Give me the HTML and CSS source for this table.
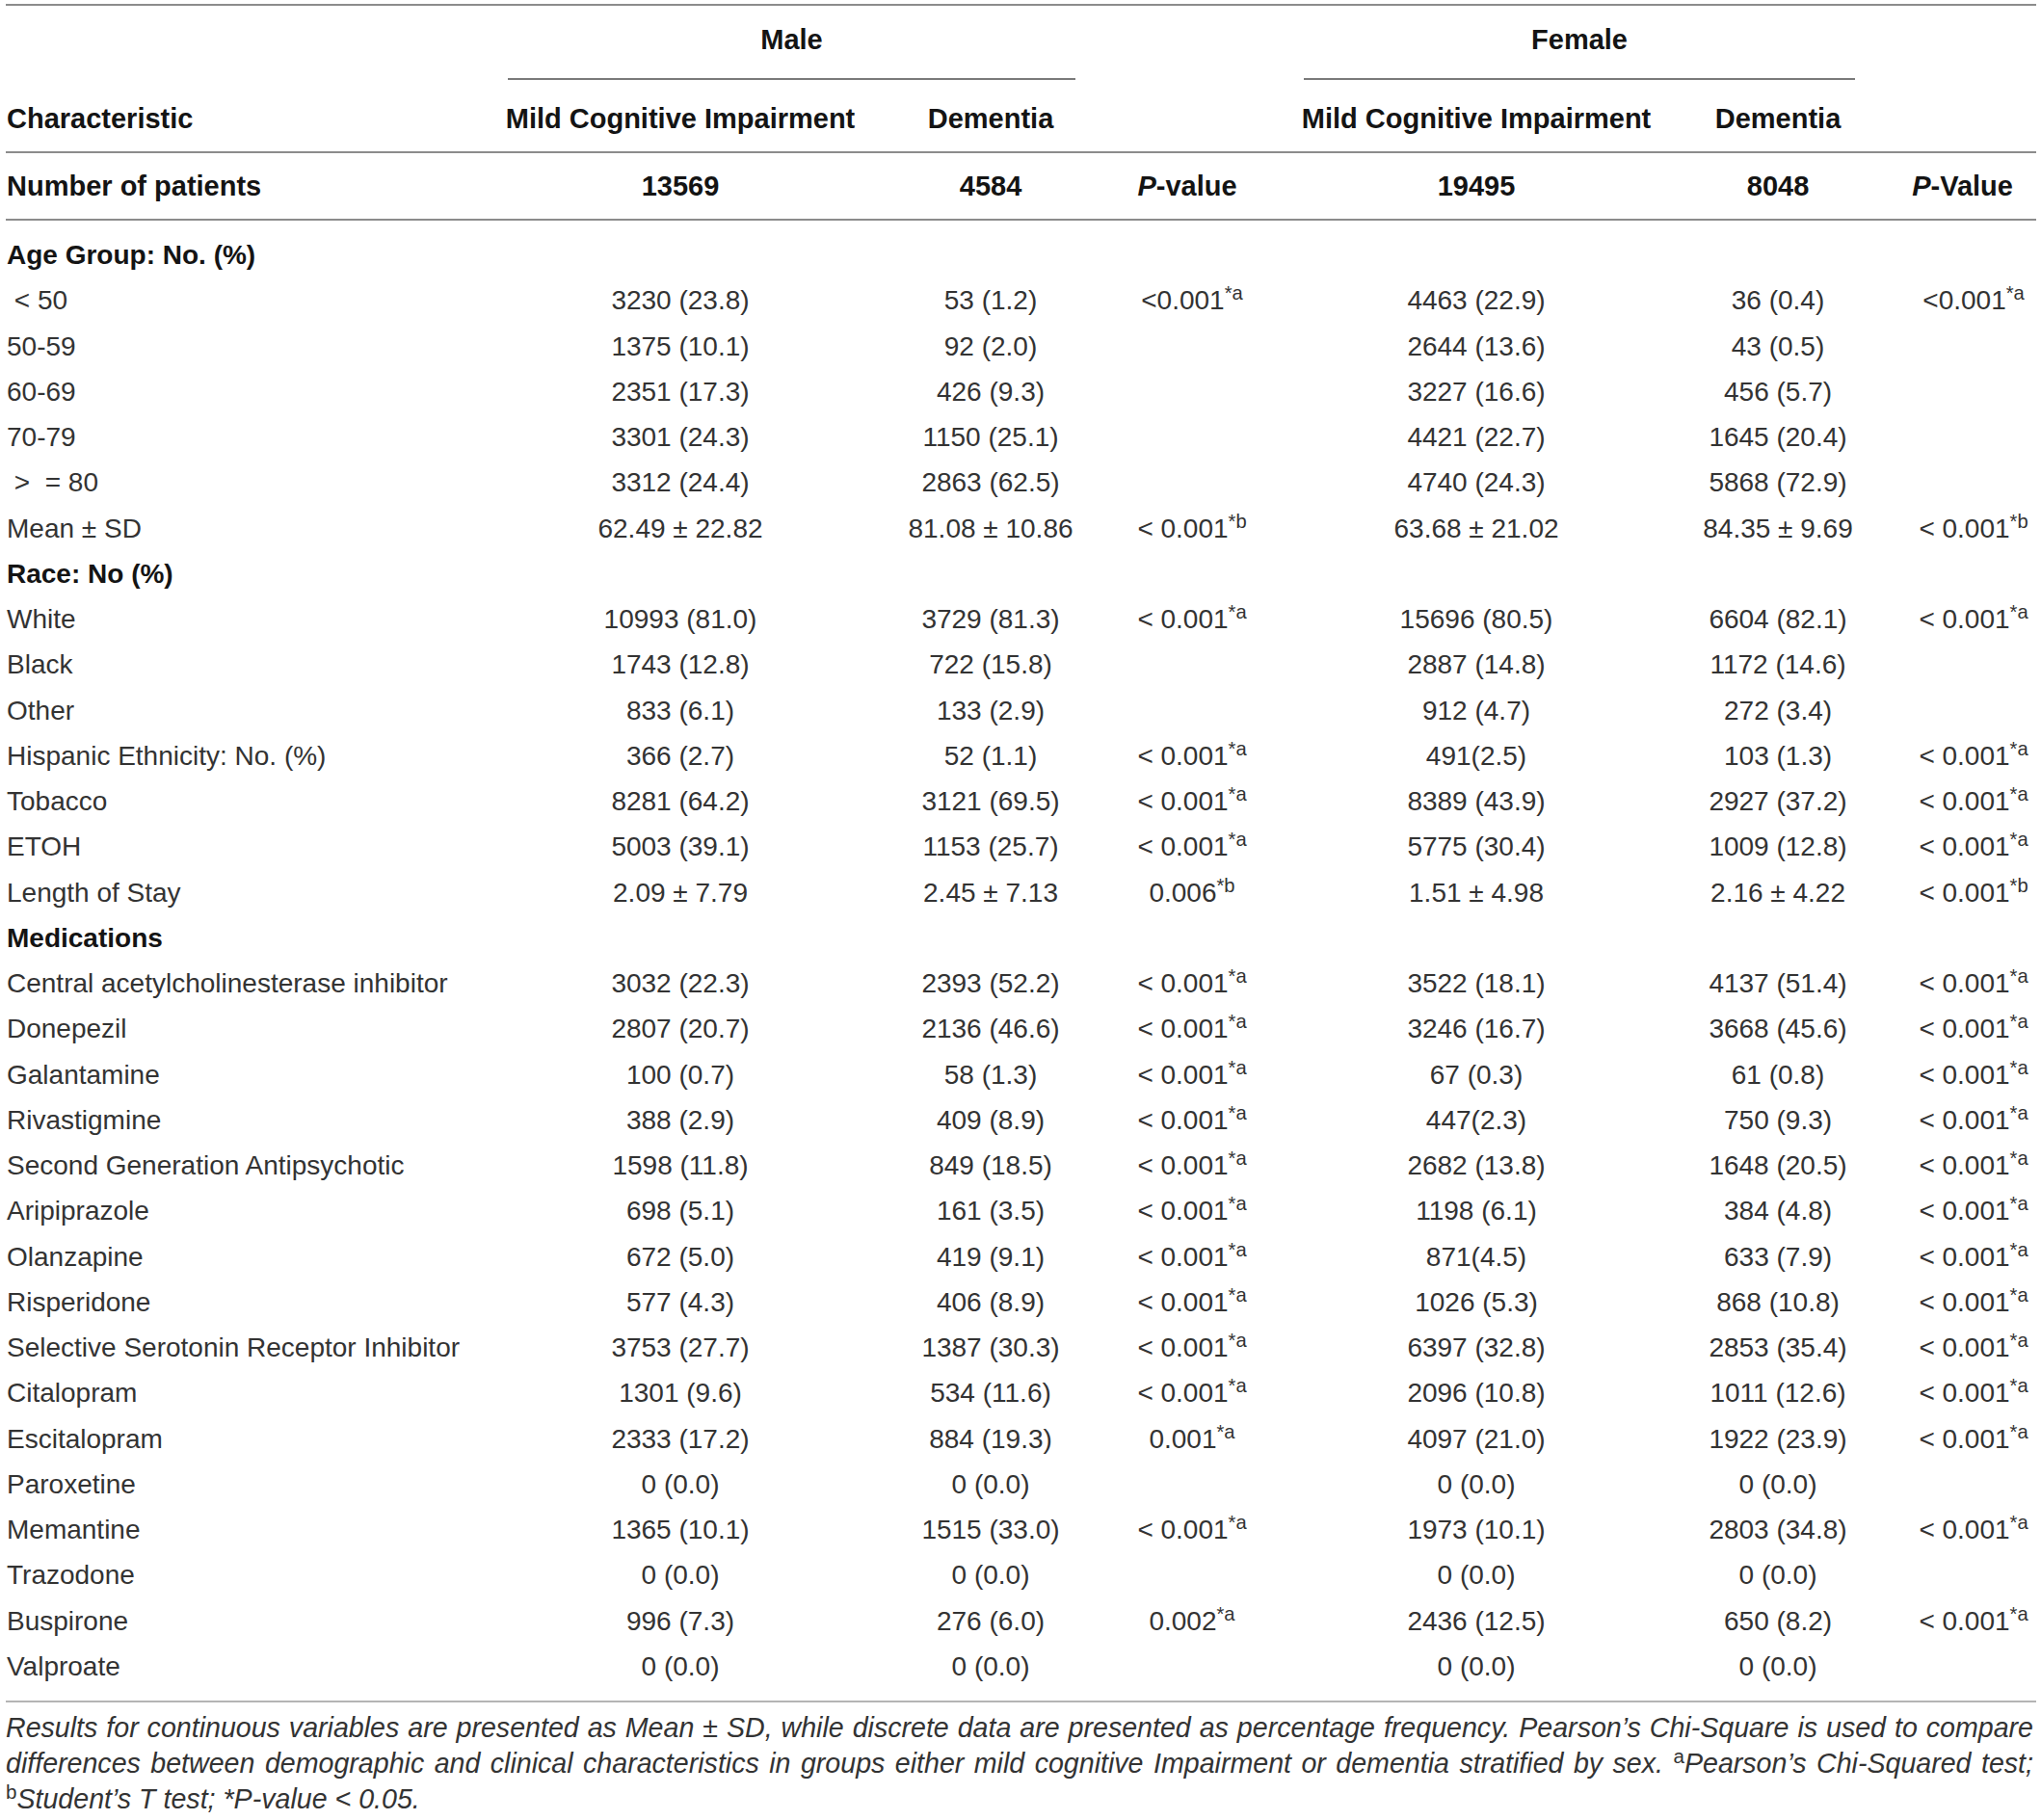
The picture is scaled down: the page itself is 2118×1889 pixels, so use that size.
FILE: index.html
```html
<!DOCTYPE html>
<html lang="en">
<head>
  <meta charset="UTF-8">
  <meta name="viewport" content="width=device-width, initial-scale=1.0">
  <title>Characteristics by sex</title>
  <link rel="stylesheet" href="styles.css">
</head>
<body>
  <div class="page">
    <table class="stats">
      <colgroup>
        <col class="c-label">
        <col class="c-mci-m">
        <col class="c-dem-m">
        <col class="c-p-m">
        <col class="c-mci-f">
        <col class="c-dem-f">
        <col class="c-p-f">
      </colgroup>
      <thead>
        <tr class="group-row">
          <th></th>
          <th colspan="2"><div class="group male">Male</div></th>
          <th></th>
          <th colspan="2"><div class="group female">Female</div></th>
          <th></th>
        </tr>
        <tr class="head-row">
          <th class="label">Characteristic</th>
          <th class="mci-m">Mild Cognitive Impairment</th>
          <th class="dem-m">Dementia</th>
          <th></th>
          <th class="mci-f">Mild Cognitive Impairment</th>
          <th class="dem-f">Dementia</th>
          <th></th>
        </tr>
        <tr class="count-row">
          <th class="label">Number of patients</th>
          <th class="mci-m">13569</th>
          <th class="dem-m">4584</th>
          <th class="p-head-m"><i>P</i>-value</th>
          <th class="mci-f">19495</th>
          <th class="dem-f">8048</th>
          <th class="p-head-f"><i>P</i>-Value</th>
        </tr>
      </thead>
      <tbody>
        <tr class="first"><td class="label section" colspan="7">Age Group: No. (%)</td></tr>
        <tr><td class="label">&nbsp;&lt; 50</td><td class="mci-m">3230 (23.8)</td><td class="dem-m">53 (1.2)</td><td class="p-m">&lt;0.001<sup>*a</sup></td><td class="mci-f">4463 (22.9)</td><td class="dem-f">36 (0.4)</td><td class="p-f">&lt;0.001<sup>*a</sup></td></tr>
        <tr><td class="label">50-59</td><td class="mci-m">1375 (10.1)</td><td class="dem-m">92 (2.0)</td><td class="p-m"></td><td class="mci-f">2644 (13.6)</td><td class="dem-f">43 (0.5)</td><td class="p-f"></td></tr>
        <tr><td class="label">60-69</td><td class="mci-m">2351 (17.3)</td><td class="dem-m">426 (9.3)</td><td class="p-m"></td><td class="mci-f">3227 (16.6)</td><td class="dem-f">456 (5.7)</td><td class="p-f"></td></tr>
        <tr><td class="label">70-79</td><td class="mci-m">3301 (24.3)</td><td class="dem-m">1150 (25.1)</td><td class="p-m"></td><td class="mci-f">4421 (22.7)</td><td class="dem-f">1645 (20.4)</td><td class="p-f"></td></tr>
        <tr><td class="label">&nbsp;&gt; &nbsp;= 80</td><td class="mci-m">3312 (24.4)</td><td class="dem-m">2863 (62.5)</td><td class="p-m"></td><td class="mci-f">4740 (24.3)</td><td class="dem-f">5868 (72.9)</td><td class="p-f"></td></tr>
        <tr><td class="label">Mean ± SD</td><td class="mci-m">62.49 ± 22.82</td><td class="dem-m">81.08 ± 10.86</td><td class="p-m">&lt; 0.001<sup>*b</sup></td><td class="mci-f">63.68 ± 21.02</td><td class="dem-f">84.35 ± 9.69</td><td class="p-f">&lt; 0.001<sup>*b</sup></td></tr>
        <tr><td class="label section" colspan="7">Race: No (%)</td></tr>
        <tr><td class="label">White</td><td class="mci-m">10993 (81.0)</td><td class="dem-m">3729 (81.3)</td><td class="p-m">&lt; 0.001<sup>*a</sup></td><td class="mci-f">15696 (80.5)</td><td class="dem-f">6604 (82.1)</td><td class="p-f">&lt; 0.001<sup>*a</sup></td></tr>
        <tr><td class="label">Black</td><td class="mci-m">1743 (12.8)</td><td class="dem-m">722 (15.8)</td><td class="p-m"></td><td class="mci-f">2887 (14.8)</td><td class="dem-f">1172 (14.6)</td><td class="p-f"></td></tr>
        <tr><td class="label">Other</td><td class="mci-m">833 (6.1)</td><td class="dem-m">133 (2.9)</td><td class="p-m"></td><td class="mci-f">912 (4.7)</td><td class="dem-f">272 (3.4)</td><td class="p-f"></td></tr>
        <tr><td class="label">Hispanic Ethnicity: No. (%)</td><td class="mci-m">366 (2.7)</td><td class="dem-m">52 (1.1)</td><td class="p-m">&lt; 0.001<sup>*a</sup></td><td class="mci-f">491(2.5)</td><td class="dem-f">103 (1.3)</td><td class="p-f">&lt; 0.001<sup>*a</sup></td></tr>
        <tr><td class="label">Tobacco</td><td class="mci-m">8281 (64.2)</td><td class="dem-m">3121 (69.5)</td><td class="p-m">&lt; 0.001<sup>*a</sup></td><td class="mci-f">8389 (43.9)</td><td class="dem-f">2927 (37.2)</td><td class="p-f">&lt; 0.001<sup>*a</sup></td></tr>
        <tr><td class="label">ETOH</td><td class="mci-m">5003 (39.1)</td><td class="dem-m">1153 (25.7)</td><td class="p-m">&lt; 0.001<sup>*a</sup></td><td class="mci-f">5775 (30.4)</td><td class="dem-f">1009 (12.8)</td><td class="p-f">&lt; 0.001<sup>*a</sup></td></tr>
        <tr><td class="label">Length of Stay</td><td class="mci-m">2.09 ± 7.79</td><td class="dem-m">2.45 ± 7.13</td><td class="p-m">0.006<sup>*b</sup></td><td class="mci-f">1.51 ± 4.98</td><td class="dem-f">2.16 ± 4.22</td><td class="p-f">&lt; 0.001<sup>*b</sup></td></tr>
        <tr><td class="label section" colspan="7">Medications</td></tr>
        <tr><td class="label">Central acetylcholinesterase inhibitor</td><td class="mci-m">3032 (22.3)</td><td class="dem-m">2393 (52.2)</td><td class="p-m">&lt; 0.001<sup>*a</sup></td><td class="mci-f">3522 (18.1)</td><td class="dem-f">4137 (51.4)</td><td class="p-f">&lt; 0.001<sup>*a</sup></td></tr>
        <tr><td class="label">Donepezil</td><td class="mci-m">2807 (20.7)</td><td class="dem-m">2136 (46.6)</td><td class="p-m">&lt; 0.001<sup>*a</sup></td><td class="mci-f">3246 (16.7)</td><td class="dem-f">3668 (45.6)</td><td class="p-f">&lt; 0.001<sup>*a</sup></td></tr>
        <tr><td class="label">Galantamine</td><td class="mci-m">100 (0.7)</td><td class="dem-m">58 (1.3)</td><td class="p-m">&lt; 0.001<sup>*a</sup></td><td class="mci-f">67 (0.3)</td><td class="dem-f">61 (0.8)</td><td class="p-f">&lt; 0.001<sup>*a</sup></td></tr>
        <tr><td class="label">Rivastigmine</td><td class="mci-m">388 (2.9)</td><td class="dem-m">409 (8.9)</td><td class="p-m">&lt; 0.001<sup>*a</sup></td><td class="mci-f">447(2.3)</td><td class="dem-f">750 (9.3)</td><td class="p-f">&lt; 0.001<sup>*a</sup></td></tr>
        <tr><td class="label">Second Generation Antipsychotic</td><td class="mci-m">1598 (11.8)</td><td class="dem-m">849 (18.5)</td><td class="p-m">&lt; 0.001<sup>*a</sup></td><td class="mci-f">2682 (13.8)</td><td class="dem-f">1648 (20.5)</td><td class="p-f">&lt; 0.001<sup>*a</sup></td></tr>
        <tr><td class="label">Aripiprazole</td><td class="mci-m">698 (5.1)</td><td class="dem-m">161 (3.5)</td><td class="p-m">&lt; 0.001<sup>*a</sup></td><td class="mci-f">1198 (6.1)</td><td class="dem-f">384 (4.8)</td><td class="p-f">&lt; 0.001<sup>*a</sup></td></tr>
        <tr><td class="label">Olanzapine</td><td class="mci-m">672 (5.0)</td><td class="dem-m">419 (9.1)</td><td class="p-m">&lt; 0.001<sup>*a</sup></td><td class="mci-f">871(4.5)</td><td class="dem-f">633 (7.9)</td><td class="p-f">&lt; 0.001<sup>*a</sup></td></tr>
        <tr><td class="label">Risperidone</td><td class="mci-m">577 (4.3)</td><td class="dem-m">406 (8.9)</td><td class="p-m">&lt; 0.001<sup>*a</sup></td><td class="mci-f">1026 (5.3)</td><td class="dem-f">868 (10.8)</td><td class="p-f">&lt; 0.001<sup>*a</sup></td></tr>
        <tr><td class="label">Selective Serotonin Receptor Inhibitor</td><td class="mci-m">3753 (27.7)</td><td class="dem-m">1387 (30.3)</td><td class="p-m">&lt; 0.001<sup>*a</sup></td><td class="mci-f">6397 (32.8)</td><td class="dem-f">2853 (35.4)</td><td class="p-f">&lt; 0.001<sup>*a</sup></td></tr>
        <tr><td class="label">Citalopram</td><td class="mci-m">1301 (9.6)</td><td class="dem-m">534 (11.6)</td><td class="p-m">&lt; 0.001<sup>*a</sup></td><td class="mci-f">2096 (10.8)</td><td class="dem-f">1011 (12.6)</td><td class="p-f">&lt; 0.001<sup>*a</sup></td></tr>
        <tr><td class="label">Escitalopram</td><td class="mci-m">2333 (17.2)</td><td class="dem-m">884 (19.3)</td><td class="p-m">0.001<sup>*a</sup></td><td class="mci-f">4097 (21.0)</td><td class="dem-f">1922 (23.9)</td><td class="p-f">&lt; 0.001<sup>*a</sup></td></tr>
        <tr><td class="label">Paroxetine</td><td class="mci-m">0 (0.0)</td><td class="dem-m">0 (0.0)</td><td class="p-m"></td><td class="mci-f">0 (0.0)</td><td class="dem-f">0 (0.0)</td><td class="p-f"></td></tr>
        <tr><td class="label">Memantine</td><td class="mci-m">1365 (10.1)</td><td class="dem-m">1515 (33.0)</td><td class="p-m">&lt; 0.001<sup>*a</sup></td><td class="mci-f">1973 (10.1)</td><td class="dem-f">2803 (34.8)</td><td class="p-f">&lt; 0.001<sup>*a</sup></td></tr>
        <tr><td class="label">Trazodone</td><td class="mci-m">0 (0.0)</td><td class="dem-m">0 (0.0)</td><td class="p-m"></td><td class="mci-f">0 (0.0)</td><td class="dem-f">0 (0.0)</td><td class="p-f"></td></tr>
        <tr><td class="label">Buspirone</td><td class="mci-m">996 (7.3)</td><td class="dem-m">276 (6.0)</td><td class="p-m">0.002<sup>*a</sup></td><td class="mci-f">2436 (12.5)</td><td class="dem-f">650 (8.2)</td><td class="p-f">&lt; 0.001<sup>*a</sup></td></tr>
        <tr class="last"><td class="label">Valproate</td><td class="mci-m">0 (0.0)</td><td class="dem-m">0 (0.0)</td><td class="p-m"></td><td class="mci-f">0 (0.0)</td><td class="dem-f">0 (0.0)</td><td class="p-f"></td></tr>
      </tbody>
    </table>

    <p class="note">Results for continuous variables are presented as Mean ± SD, while discrete data are presented as percentage frequency. Pearson’s Chi-Square is used to compare differences between demographic and clinical characteristics in groups either mild cognitive Impairment or dementia stratified by sex. <sup>a</sup>Pearson’s Chi-Squared test; <sup>b</sup>Student’s T test; *P-value &lt; 0.05.</p>
  </div>
</body>
</html>
```

FILE: styles.css
```css
body {
  margin: 0;
  background: #fff;
  font-family: "Liberation Sans", Arial, sans-serif;
  color: #333;
}

.page {
  width: 2107px;
  padding: 4px 0 0 6px;
}

.stats {
  width: 2107px;
  table-layout: fixed;
  border-collapse: separate;
  border-spacing: 0;
  border-top: 2px solid #8c8c8c;
  font-size: 28px;
}

.c-label { width: 464px; }
.c-mci-m { width: 430px; }
.c-dem-m { width: 250px; }
.c-p-m { width: 170px; }
.c-mci-f { width: 420px; }
.c-dem-f { width: 220px; }
.c-p-f { width: 153px; }

.stats th,
.stats td {
  padding: 0;
  text-align: center;
  white-space: nowrap;
}

.stats th {
  font-size: 29px;
  font-weight: bold;
  color: #141414;
  line-height: 34px;
}

.stats .label {
  text-align: left;
  padding-left: 1px;
}

.mci-m { padding-left: 42px !important; }
.dem-m { padding-left: 6px !important; }
.p-m { padding-left: 4px !important; }
.mci-f { padding-left: 4px !important; }
.dem-f { padding-right: 10px !important; }
.p-f { padding-left: 23px !important; }
.p-head-m { padding-right: 6px !important; }
.p-head-f { padding-left: 0; }

.group-row th {
  vertical-align: bottom;
}

.group {
  padding: 18px 0 23px;
  border-bottom: 2px solid #7a7a7a;
}

.group.male {
  margin: 0 34px 0 57px;
}

.group.female {
  margin: 0 35px 0 33px;
}

.head-row th {
  padding-top: 23px;
  padding-bottom: 17px;
  border-bottom: 2px solid #8c8c8c;
}

.count-row th {
  padding-top: 17px;
  padding-bottom: 17px;
  border-bottom: 2px solid #8c8c8c;
}

.stats td {
  line-height: 47.25px;
  font-weight: normal;
}

.stats td.section {
  font-weight: bold;
  color: #141414;
}

.stats tr.first td {
  padding-top: 12px;
}

.stats tr.last td {
  padding-bottom: 12px;
  border-bottom: 2px solid #b4b4b4;
}

sup {
  font-size: 0.72em;
  line-height: 0;
  vertical-align: 0.48em;
}

.note {
  margin: 8px 0 0;
  width: 2104px;
  font-size: 28.6px;
  line-height: 37px;
  font-style: italic;
  text-align: justify;
  color: #333;
}

.note sup {
  font-style: normal;
  font-size: 0.72em;
}
```
